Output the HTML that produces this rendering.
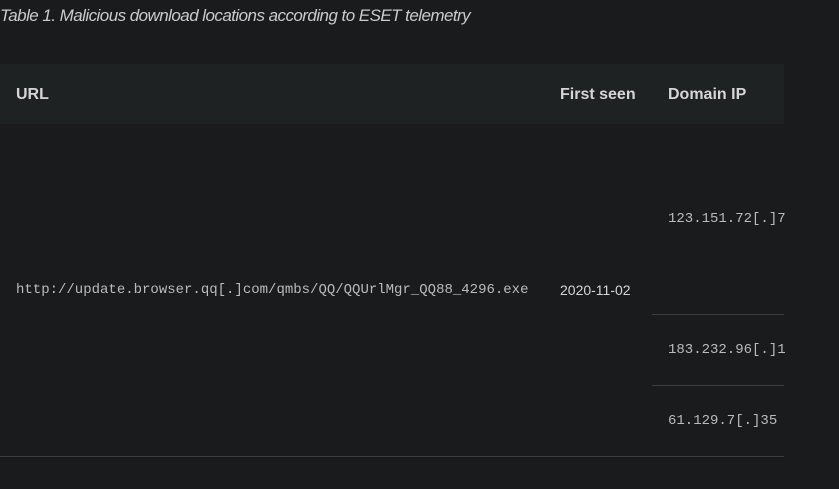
<!DOCTYPE html><html><head><style>
body{margin:0;width:839px;height:489px;background:#1a1b1d;overflow:hidden;font-family:"Liberation Sans",sans-serif;position:relative}
.a{position:absolute;white-space:nowrap}
.cap{left:0;top:6px;font-style:italic;font-size:17px;color:#c9cbcc;letter-spacing:-0.55px}
.hd{left:0;top:64px;width:784px;height:60px;background:#1f2223}
.h{font-weight:bold;font-size:16px;color:#d4d6d7;top:86px}
.m{font-family:"Liberation Mono",monospace;font-size:14px;color:#b9bbbc}
.l{background:#3a3c3e;height:1px}
</style></head><body>
<div class="a cap">Table 1. Malicious download locations according to ESET telemetry</div>
<div class="a hd"></div>
<div class="a h" style="left:16px">URL</div>
<div class="a h" style="left:560px">First seen</div>
<div class="a h" style="left:668px">Domain IP</div>
<div class="a m" style="left:16px;top:282px">http://update.browser.qq[.]com/qmbs/QQ/QQUrlMgr_QQ88_4296.exe</div>
<div class="a" style="left:560px;top:282px;font-size:14px;color:#d4d6d7">2020-11-02</div>
<div class="a m" style="left:668px;top:211px">123.151.72[.]7</div>
<div class="a m" style="left:668px;top:342px">183.232.96[.]1</div>
<div class="a m" style="left:668px;top:413px">61.129.7[.]35</div>
<div class="a l" style="left:652px;top:314px;width:132px"></div>
<div class="a l" style="left:652px;top:385px;width:132px"></div>
<div class="a l" style="left:0;top:456px;width:784px"></div>
</body></html>
